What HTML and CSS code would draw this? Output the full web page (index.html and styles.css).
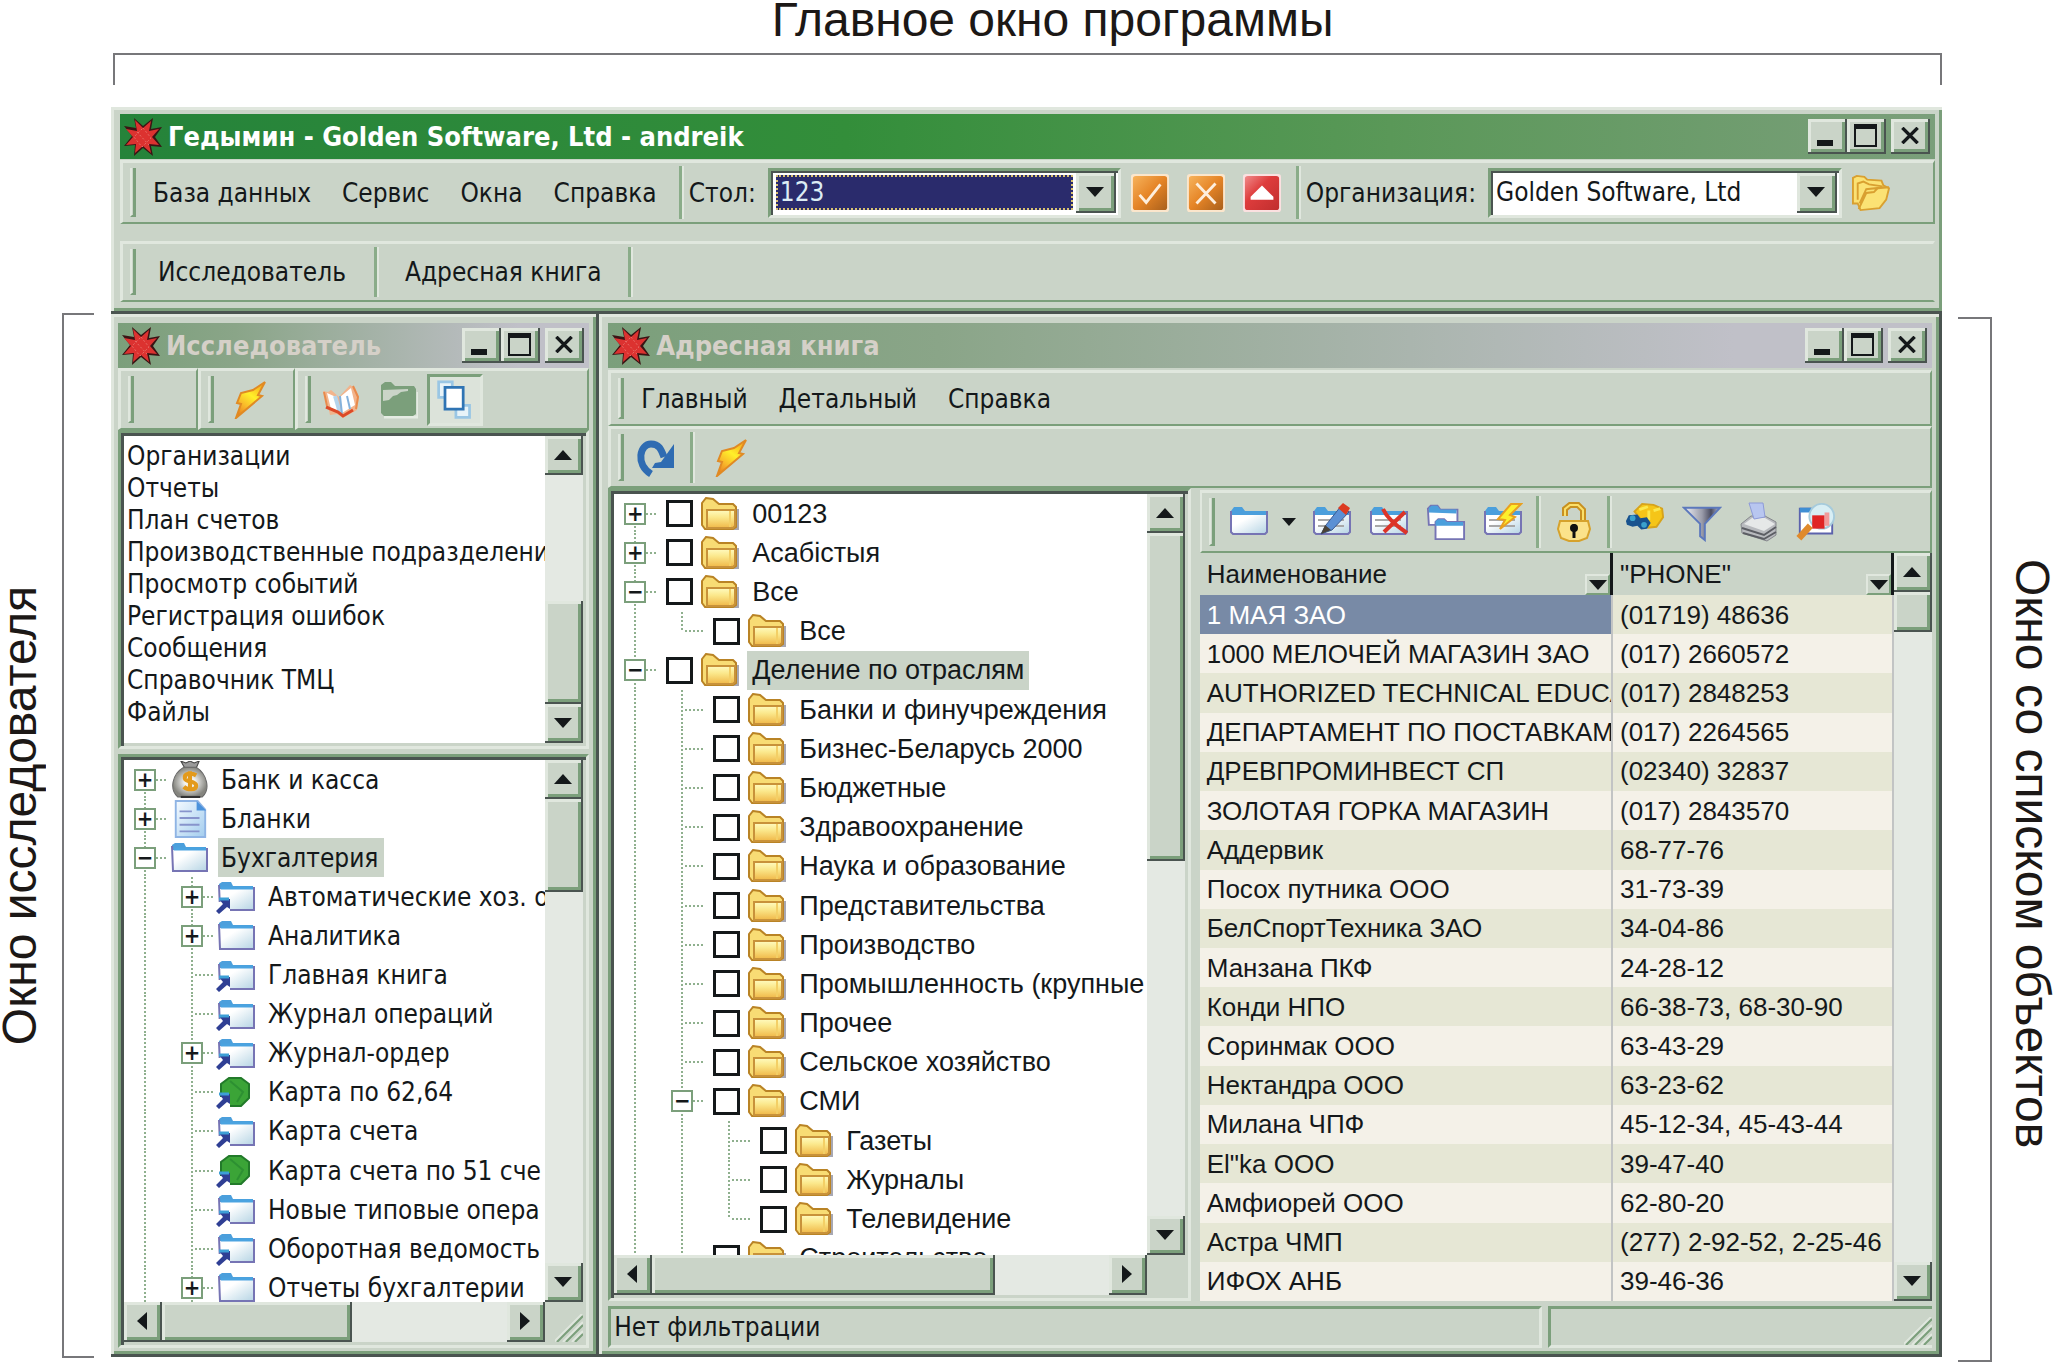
FILE: index.html
```html
<!DOCTYPE html>
<html lang="ru">
<head>
<meta charset="utf-8">
<title>Гедымин - Golden Software, Ltd - andreik</title>
<link rel="stylesheet" href="styles.css">
</head>
<body>
<svg class="sprite" aria-hidden="true">
  <defs>
    <linearGradient id="g-blue" x1="0" y1="0" x2="1" y2="1"><stop offset="0.3" stop-color="#fff"/><stop offset="1" stop-color="#b5d4e4"/></linearGradient>
    <linearGradient id="g-yellow" x1="0" y1="0" x2="0" y2="1"><stop offset="0" stop-color="#fffbc0"/><stop offset="0.4" stop-color="#fbe88c"/><stop offset="1" stop-color="#f0b848"/></linearGradient>
    <linearGradient id="g-orange" x1="0" y1="0" x2="1" y2="1"><stop offset="0" stop-color="#f7b35c"/><stop offset="0.5" stop-color="#e58426"/><stop offset="1" stop-color="#a9601c"/></linearGradient>
    <linearGradient id="g-red" x1="0" y1="0" x2="1" y2="1"><stop offset="0" stop-color="#f08a8a"/><stop offset="0.4" stop-color="#de3c3c"/><stop offset="1" stop-color="#c02e2e"/></linearGradient>
    <linearGradient id="g-bolt" x1="0.8" y1="0" x2="0.2" y2="1"><stop offset="0" stop-color="#f7a81c"/><stop offset="0.4" stop-color="#fff02a"/><stop offset="0.7" stop-color="#f9b92a"/><stop offset="1" stop-color="#e87d1c"/></linearGradient>
    <linearGradient id="g-steel" x1="0" y1="0" x2="1" y2="0"><stop offset="0" stop-color="#f2f2f6"/><stop offset="0.5" stop-color="#9a9caa"/><stop offset="0.75" stop-color="#4a4c60"/><stop offset="1" stop-color="#b8c0dc"/></linearGradient>
    <linearGradient id="g-doc" x1="0" y1="0" x2="1" y2="1"><stop offset="0" stop-color="#f4faff"/><stop offset="1" stop-color="#a3cdee"/></linearGradient>
    <radialGradient id="g-bag"><stop offset="0.3" stop-color="#f4f4f2"/><stop offset="1" stop-color="#85857f"/></radialGradient>
  </defs>
  <symbol id="star" viewBox="0 0 38 38"><path d="M10 0l9 8 10-8-2 11 11-2-7 10 7 10-11-1 2 10-10-8-9 8 1-11-11 1 8-10-8-10 12 2z" fill="#3a1414"/><path d="M11 2l8 8 8-7-2 10 10-2-7 8 7 8-10-1 2 9-8-7-8 7 1-9-10 1 7-8-7-8 11 2z" fill="#dc3230"/><path d="M19 10l8 10-9 9-8-10zM13 14l12 13" fill="none" stroke="#e66c66" stroke-dasharray="2 2"/></symbol>
  <symbol id="bolt" viewBox="0 0 38 38"><path d="M34 1l-7 13 4 1L5 37l5-14-4-1 4-10 12-3z" fill="url(#g-bolt)" stroke="#e08a24" stroke-width="2"/></symbol>
  <symbol id="book" viewBox="0 0 38 38"><path d="M1 10l5 1 3-2 8 7L28 4l5 3 4 9-2 13-9 5-5 3-6-4-7 1-2-9z" fill="#f2b48c"/><path d="M5 12l9 4 5 17-10-5zM29 7l4 17-13 8-2-16z" fill="#fff"/><path d="M13 15l5 17" stroke="#b4d4ec" stroke-width="4"/><path d="M18 15l2 18M25 15l3 13" stroke="#84b2dc" stroke-width="2" fill="none"/><path d="M4 26l12 5 5 4 10-6" fill="none" stroke="#dc4a28" stroke-width="3"/><path d="M2 11l3 14M31 5l5 11-2 12" fill="none" stroke="#e88a4c" stroke-width="2"/></symbol>
  <symbol id="folder-off" viewBox="0 0 38 38"><path d="M4 36h34V11" fill="none" stroke="#e4ebe2" stroke-width="3"/><path d="M1 4l4-3h6l4 4h19l2 3v25l-3 2H4l-3-3z" fill="#7b9f7b"/><path d="M3 9v11l6-1 4-4 4-1 4-3 7-1V8z" fill="#cad4c8"/></symbol>
  <symbol id="layers" viewBox="0 0 40 44"><path d="M2 2h15v17H2zM21 28h15v13H21z" fill="#e8f3f8" stroke="#9ac6e4" stroke-width="3"/><path d="M9 8h20v24H9z" fill="#fff" stroke="#2f74b4" stroke-width="3"/></symbol>
  <symbol id="refresh" viewBox="0 0 38 38"><path d="M15 35C-1 25 4 5 15 5c8 0 10 5 13 13" fill="none" stroke="#2f6cb2" stroke-width="7"/><path d="M38 5v24H16l3-5 6-1z" fill="#2f6cb2"/></symbol>
  <symbol id="fold-y" viewBox="0 0 40 34"><path d="M6 12h33v21H7z" fill="#a8a8b2"/><path d="M2 6l4-5 7 1 6 5h14l3 3v20l-3 2H5l-3-4z" fill="#f8dc74" stroke="#b98325" stroke-width="2"/><path d="M7 13h28v16l-2 2H7z" fill="url(#g-yellow)" stroke="#c8923a" stroke-width="2"/><path d="M30 14v16" stroke="#f3cf66" stroke-width="2"/></symbol>
  <symbol id="fold-b" viewBox="0 0 38 31"><path d="M1 3l3-2h9l2 4h20v4H1z" fill="#4b9fdc"/><path d="M2 8h34v21H3z" fill="url(#g-blue)"/><path d="M1 4l1 25h34V6" fill="none" stroke="#7674b4" stroke-width="2"/><path d="M3 7h32" stroke="#4aa3e0" stroke-width="3"/></symbol>
  <symbol id="cut" viewBox="0 0 14 18"><path d="M0 6h14v12H4z" fill="#fff"/><path d="M3 3h11v10l-3-2-8 7-3-3 7-7z" fill="#2f3f94"/><path d="M3 3h10" stroke="#3d9fd6" stroke-width="3"/></symbol>
  <symbol id="octagon" viewBox="0 0 38 31"><path d="M11 1h12l8 6v14l-8 8H11l-8-8V7z" fill="#3ba437" stroke="#227a2a" stroke-width="2"/><path d="M12 4l13 11-6 10" fill="none" stroke="#2d9032" stroke-width="2"/></symbol>
  <symbol id="bag" viewBox="0 0 36 37"><path d="M9 0l4 7h11l3-7-5 2-4-2-4 2z" fill="#9a9a9a" stroke="#444"/><path d="M12 6C0 13-2 28 6 35h24c8-7 5-22-6-29z" fill="url(#g-bag)" stroke="#666"/><path d="M9 35h19" stroke="#333" stroke-width="2"/><path d="M24 14c-5-3-12-2-11 3 1 4 11 2 11 7s-9 4-12 1M18 10v19" stroke="#e39a1c" stroke-width="4" fill="none"/></symbol>
  <symbol id="doc" viewBox="0 0 36 40"><path d="M3 1h23l8 9v29H3z" fill="url(#g-doc)" stroke="#8fb4e4" stroke-width="2"/><path d="M25 1v10h10z" fill="#4a92dc"/><path d="M7 12h13M7 19h21M7 26h21M7 33h21" stroke="#8794cc" stroke-width="2"/></symbol>
  <symbol id="check" viewBox="0 0 40 40"><rect width="40" height="40" rx="3" fill="#fbe6cc"/><rect x="2" y="2" width="36" height="36" rx="3" fill="url(#g-orange)"/><path d="M9 22l7 8 15-19" fill="none" stroke="#fdeedd" stroke-width="3"/></symbol>
  <symbol id="cancel" viewBox="0 0 40 40"><rect width="40" height="40" rx="3" fill="#fbe6cc"/><rect x="2" y="2" width="36" height="36" rx="3" fill="url(#g-orange)"/><path d="M10 10l20 21M30 10L10 31" fill="none" stroke="#fdeedd" stroke-width="3"/></symbol>
  <symbol id="up" viewBox="0 0 40 40"><rect width="40" height="40" rx="3" fill="#fbe0e0"/><rect x="2" y="2" width="36" height="36" rx="3" fill="url(#g-red)"/><path d="M20 12l12 12v3H8v-3z" fill="#fff"/></symbol>
  <symbol id="open" viewBox="0 0 40 38"><path d="M1 30V3l4-2 8 1 3 3 15 1 2 5 6 3-3 12-7 9-20 2-3-7z" fill="#fbe274" stroke="#d9a030" stroke-width="2"/><path d="M6 26V9l6-2 6 3 14 2M8 30l7-15 19-2M7 36l8-17 8-1 4-4 12-1" fill="none" stroke="#d9a030" stroke-width="2"/></symbol>
  <symbol id="t-folder" viewBox="0 0 38 40"><path d="M1 9l3-4h8l3 4h21v5H1z" fill="#4b9fdc"/><path d="M2 13h34v19H2z" fill="url(#g-blue)"/><path d="M1 9v21l2 2h32l2-2V9" fill="none" stroke="#7674b4" stroke-width="2"/></symbol>
  <symbol id="t-edit" viewBox="0 0 38 40"><use href="#t-folder"/><path d="M5 18h26M5 24h26" stroke="#a8a8a8" stroke-width="2"/><path d="M8 32l5-9L28 4l8 6-17 18z" fill="#5b90d4" stroke="#3c5a90"/><path d="M8 32l4-9 6 5z" fill="#494238"/><path d="M25 6l5-5 7 5-4 7z" fill="#dc3a20"/></symbol>
  <symbol id="t-del" viewBox="0 0 38 40"><use href="#t-folder"/><path d="M5 18h26M5 24h26" stroke="#a8a8a8" stroke-width="2"/><path d="M13 7c4 9 12 16 24 24M35 10L14 30" fill="none" stroke="#dc3428" stroke-width="4"/></symbol>
  <symbol id="t-copy" viewBox="0 0 40 42"><path d="M1 7l3-3h7l3 4h18v16H2z" fill="#fff" stroke="#7674b4" stroke-width="2"/><path d="M2 11V6l3-2h6l3 4h17v4z" fill="#4b9fdc"/><path d="M9 21l3-3h6l3 3h18v18H9z" fill="#fff" stroke="#7674b4" stroke-width="2"/><path d="M9 25v-5l3-2h6l3 3h17v4z" fill="#4b9fdc"/></symbol>
  <symbol id="t-bolt" viewBox="0 0 38 40"><use href="#t-folder"/><path d="M5 18h26M5 24h26" stroke="#a8a8a8" stroke-width="2"/><path d="M37 2h-10L14 17l7 1-5 9 15-12-5-2z" fill="#fdf02c" stroke="#e8a020" stroke-width="2"/></symbol>
  <symbol id="t-lock" viewBox="0 0 34 40"><path d="M8 14V7l5-4h8l5 5v12" fill="none" stroke="#c89020" stroke-width="6"/><path d="M8 14V7l5-4h8l5 5v12" fill="none" stroke="#fbe06a" stroke-width="2"/><path d="M3 19h28l2 8-3 9-8 3H12l-8-3-3-9z" fill="#fbe28a" stroke="#d6a22c" stroke-width="2"/><path d="M17 22v14" stroke="#111" stroke-width="3"/><circle cx="17" cy="26" r="4" fill="#111"/></symbol>
  <symbol id="t-find" viewBox="0 0 42 40"><path d="M10 9l8-8 12 1 9 4 1 9-7 10-9 1z" fill="#f5c518" stroke="#d6a31c" stroke-width="2"/><path d="M15 7l9-3M30 8l7-2M25 8v10" stroke="#fbe84e" stroke-width="3"/><path d="M1 19l3-6 9-1 3 4 7-1 4 6-4 6-6 1-4-4-5 1-6-2z" fill="#18528e"/><circle cx="8" cy="16" r="3" fill="#3ba1cc"/><circle cx="20" cy="23" r="3" fill="#3ba1cc"/></symbol>
  <symbol id="t-filter" viewBox="0 0 42 40"><path d="M2 5h38L24 22v17l-5-4V22z" fill="url(#g-steel)" stroke="#5c78bc" stroke-width="2"/></symbol>
  <symbol id="t-print" viewBox="0 0 40 40"><path d="M2 22l10-8h14l11 6v13l-9 6-25-8z" fill="#b8babe" stroke="#85878c"/><path d="M3 26l22 7 12-8M4 31l21 6 12-7" fill="none" stroke="#5c5e64" stroke-width="2"/><path d="M5 22l20 7 11-7-10-6H13z" fill="#e6e8e8"/><path d="M10 1h14l2 14-11 2z" fill="#b8c6f0" stroke="#8d9ad8"/></symbol>
  <symbol id="t-look" viewBox="0 0 42 40"><path d="M4 6h14v4h20v22H4z" fill="#fff" stroke="#5c62ac" stroke-width="2"/><path d="M4 5h12v5H4z" fill="#3f8ed4"/><circle cx="27" cy="14" r="13" fill="#d8eef4" stroke="#a6cbdc" stroke-width="2"/><path d="M17 13h13v14H17z" fill="#e02424"/><path d="M30 10h5v14h-5z" fill="#f29a9a"/><path d="M3 37l12-13" stroke="#e08a2c" stroke-width="7"/></symbol>
</svg>

<div class="figure">
  <header class="note-top">
    <h1 class="note-text">Главное окно программы</h1>
    <div class="bracket bracket-top"></div>
  </header>
  <aside class="note-side note-left"><p class="note-text note-up">Окно исследователя</p><div class="bracket bracket-left"></div></aside>

  <main class="app">
    <section class="frame frame-main">
      <div class="title title-active">
        <svg class="logo"><use href="#star"/></svg><h2 class="title-text">Гедымин - Golden Software, Ltd - andreik</h2>
        <button class="wbtn" aria-label="Свернуть"><span class="w-min"></span></button><button class="wbtn" aria-label="Развернуть"><span class="w-max"></span></button><button class="wbtn wbtn-close" aria-label="Закрыть"><svg class="w-x" viewBox="0 0 20 20"><path d="M1 1l18 18M19 1L1 19"/></svg></button>
      </div>
      <div class="bar bar-menu">
        <span class="grip"></span>
        <nav class="menu"><a href="#">База данных</a><a href="#">Сервис</a><a href="#">Окна</a><a href="#">Справка</a></nav>
        <span class="sep"></span>
        <label class="bar-label" for="desk">Стол:</label>
        <div class="combo combo-desk"><select id="desk" class="combo-select combo-on"><option>123</option></select><span class="combo-arrow"><i class="tri tri-down"></i></span></div>
        <div class="square-tools"><button class="tool" aria-label="Сохранить"><svg class="ic38"><use href="#check"/></svg></button><button class="tool" aria-label="Удалить"><svg class="ic38"><use href="#cancel"/></svg></button><button class="tool" aria-label="Вверх"><svg class="ic38"><use href="#up"/></svg></button></div>
        <span class="sep"></span>
        <label class="bar-label" for="org">Организация:</label>
        <div class="combo combo-org"><select id="org" class="combo-select"><option>Golden Software, Ltd</option></select><span class="combo-arrow"><i class="tri tri-down"></i></span></div>
        <button class="tool tool-open" aria-label="Открыть"><svg class="ic38"><use href="#open"/></svg></button>
      </div>
      <div class="bar bar-tabs">
        <span class="grip"></span><button class="tab">Исследователь</button><span class="sep"></span><button class="tab">Адресная книга</button><span class="sep"></span>
      </div>
    </section>

    <div class="mdi">
      <section class="frame frame-explorer">
        <div class="title">
          <svg class="logo"><use href="#star"/></svg><h2 class="title-text">Исследователь</h2>
          <button class="wbtn" aria-label="Свернуть"><span class="w-min"></span></button><button class="wbtn" aria-label="Развернуть"><span class="w-max"></span></button><button class="wbtn wbtn-close" aria-label="Закрыть"><svg class="w-x" viewBox="0 0 20 20"><path d="M1 1l18 18M19 1L1 19"/></svg></button>
        </div>
        <div class="bands">
          <div class="bar band-a"><span class="grip"></span></div>
          <div class="bar band-b"><span class="grip"></span><button class="tool" aria-label="Выполнить"><svg class="ic38"><use href="#bolt"/></svg></button></div>
          <div class="bar band-c"><span class="grip"></span><button class="tool" aria-label="Справочник"><svg class="ic38"><use href="#book"/></svg></button><button class="tool" aria-label="Папка"><svg class="ic38"><use href="#folder-off"/></svg></button><button class="tool tool-down" aria-label="Окна"><svg class="ic40"><use href="#layers"/></svg></button></div>
        </div>
        <div class="sunken recent">
          <ul class="recent-list"><li>Организации</li><li>Отчеты</li><li>План счетов</li><li>Производственные подразделения</li><li>Просмотр событий</li><li>Регистрация ошибок</li><li>Сообщения</li><li>Справочник ТМЦ</li><li>Файлы</li></ul>
          <div class="vscroll"><button class="sbtn" aria-label="Вверх"><i class="tri tri-up"></i></button><div class="track track-end"><div class="thumb" style="height:45%"></div></div><button class="sbtn" aria-label="Вниз"><i class="tri tri-down"></i></button></div>
        </div>
        <div class="sunken nav-tree">
          <div class="pane-row">
            <ul class="tree tree-nav">
              <li><span class="g gf"><button class="ex">+</button></span><svg class="ni ni-tall"><use href="#bag"/></svg><span class="lb">Банк и касса</span></li>
              <li><span class="g gt"><button class="ex">+</button></span><svg class="ni ni-tall"><use href="#doc"/></svg><span class="lb">Бланки</span></li>
              <li><span class="g gt"><button class="ex">−</button></span><svg class="ni"><use href="#fold-b"/></svg><span class="lb lb-on">Бухгалтерия</span></li>
              <li><span class="g gv"></span><span class="g gt"><button class="ex">+</button></span><svg class="ni"><use href="#fold-b"/></svg><svg class="cut"><use href="#cut"/></svg><span class="lb">Автоматические хоз. операции</span></li>
              <li><span class="g gv"></span><span class="g gt"><button class="ex">+</button></span><svg class="ni"><use href="#fold-b"/></svg><span class="lb">Аналитика</span></li>
              <li><span class="g gv"></span><span class="g gt"></span><svg class="ni"><use href="#fold-b"/></svg><svg class="cut"><use href="#cut"/></svg><span class="lb">Главная книга</span></li>
              <li><span class="g gv"></span><span class="g gt"></span><svg class="ni"><use href="#fold-b"/></svg><svg class="cut"><use href="#cut"/></svg><span class="lb">Журнал операций</span></li>
              <li><span class="g gv"></span><span class="g gt"><button class="ex">+</button></span><svg class="ni"><use href="#fold-b"/></svg><svg class="cut"><use href="#cut"/></svg><span class="lb">Журнал-ордер</span></li>
              <li><span class="g gv"></span><span class="g gt"></span><svg class="ni"><use href="#octagon"/></svg><svg class="cut"><use href="#cut"/></svg><span class="lb">Карта по 62,64</span></li>
              <li><span class="g gv"></span><span class="g gt"></span><svg class="ni"><use href="#fold-b"/></svg><svg class="cut"><use href="#cut"/></svg><span class="lb">Карта счета</span></li>
              <li><span class="g gv"></span><span class="g gt"></span><svg class="ni"><use href="#octagon"/></svg><svg class="cut"><use href="#cut"/></svg><span class="lb">Карта счета по 51 сче</span></li>
              <li><span class="g gv"></span><span class="g gt"></span><svg class="ni"><use href="#fold-b"/></svg><svg class="cut"><use href="#cut"/></svg><span class="lb">Новые типовые опера</span></li>
              <li><span class="g gv"></span><span class="g gt"></span><svg class="ni"><use href="#fold-b"/></svg><svg class="cut"><use href="#cut"/></svg><span class="lb">Оборотная ведомость</span></li>
              <li><span class="g gv"></span><span class="g gt"><button class="ex">+</button></span><svg class="ni"><use href="#fold-b"/></svg><span class="lb">Отчеты бухгалтерии</span></li>
            </ul>
            <div class="vscroll"><button class="sbtn" aria-label="Вверх"><i class="tri tri-up"></i></button><div class="track"><div class="thumb" style="height:20%"></div></div><button class="sbtn" aria-label="Вниз"><i class="tri tri-down"></i></button></div>
          </div>
          <div class="hscroll"><button class="sbtn" aria-label="Влево"><i class="tri tri-left"></i></button><div class="track"><div class="thumb" style="width:55%"></div></div><button class="sbtn" aria-label="Вправо"><i class="tri tri-right"></i></button><span class="corner"><svg class="size-grip" viewBox="0 0 28 28"><path class="sg-l" d="M-1 28L27 0M8 28L28 8M17 28L28 17"/><path d="M2 28L28 2M11 28L28 11M20 28L28 20"/></svg></span></div>
        </div>
      </section>

      <section class="frame">
        <div class="title">
          <svg class="logo"><use href="#star"/></svg><h2 class="title-text">Адресная книга</h2>
          <button class="wbtn" aria-label="Свернуть"><span class="w-min"></span></button><button class="wbtn" aria-label="Развернуть"><span class="w-max"></span></button><button class="wbtn wbtn-close" aria-label="Закрыть"><svg class="w-x" viewBox="0 0 20 20"><path d="M1 1l18 18M19 1L1 19"/></svg></button>
        </div>
        <div class="bar bar-sub"><span class="grip"></span><nav class="menu"><a href="#">Главный</a><a href="#">Детальный</a><a href="#">Справка</a></nav></div>
        <div class="bar bar-quick"><span class="grip"></span><button class="tool" aria-label="Обновить"><svg class="ic38"><use href="#refresh"/></svg></button><span class="sep"></span><button class="tool" aria-label="Выполнить"><svg class="ic38"><use href="#bolt"/></svg></button></div>
        <div class="split">
          <div class="sunken groups">
            <div class="pane-row">
              <ul class="tree tree-groups">
                <li><span class="g gf"><button class="ex">+</button></span><input type="checkbox" id="c1"><svg class="fi"><use href="#fold-y"/></svg><label class="lb" for="c1">00123</label></li>
                <li><span class="g gt"><button class="ex">+</button></span><input type="checkbox" id="c2"><svg class="fi"><use href="#fold-y"/></svg><label class="lb" for="c2">Асабістыя</label></li>
                <li><span class="g gt"><button class="ex">−</button></span><input type="checkbox" id="c3"><svg class="fi"><use href="#fold-y"/></svg><label class="lb" for="c3">Все</label></li>
                <li><span class="g gv"></span><span class="g gl"></span><input type="checkbox" id="c4"><svg class="fi"><use href="#fold-y"/></svg><label class="lb" for="c4">Все</label></li>
                <li><span class="g gt"><button class="ex">−</button></span><input type="checkbox" id="c5"><svg class="fi"><use href="#fold-y"/></svg><label class="lb lb-on" for="c5">Деление по отраслям</label></li>
                <li><span class="g gv"></span><span class="g gt"></span><input type="checkbox" id="c6"><svg class="fi"><use href="#fold-y"/></svg><label class="lb" for="c6">Банки и финучреждения</label></li>
                <li><span class="g gv"></span><span class="g gt"></span><input type="checkbox" id="c7"><svg class="fi"><use href="#fold-y"/></svg><label class="lb" for="c7">Бизнес-Беларусь 2000</label></li>
                <li><span class="g gv"></span><span class="g gt"></span><input type="checkbox" id="c8"><svg class="fi"><use href="#fold-y"/></svg><label class="lb" for="c8">Бюджетные</label></li>
                <li><span class="g gv"></span><span class="g gt"></span><input type="checkbox" id="c9"><svg class="fi"><use href="#fold-y"/></svg><label class="lb" for="c9">Здравоохранение</label></li>
                <li><span class="g gv"></span><span class="g gt"></span><input type="checkbox" id="c10"><svg class="fi"><use href="#fold-y"/></svg><label class="lb" for="c10">Наука и образование</label></li>
                <li><span class="g gv"></span><span class="g gt"></span><input type="checkbox" id="c11"><svg class="fi"><use href="#fold-y"/></svg><label class="lb" for="c11">Представительства</label></li>
                <li><span class="g gv"></span><span class="g gt"></span><input type="checkbox" id="c12"><svg class="fi"><use href="#fold-y"/></svg><label class="lb" for="c12">Производство</label></li>
                <li><span class="g gv"></span><span class="g gt"></span><input type="checkbox" id="c13"><svg class="fi"><use href="#fold-y"/></svg><label class="lb" for="c13">Промышленность (крупные</label></li>
                <li><span class="g gv"></span><span class="g gt"></span><input type="checkbox" id="c14"><svg class="fi"><use href="#fold-y"/></svg><label class="lb" for="c14">Прочее</label></li>
                <li><span class="g gv"></span><span class="g gt"></span><input type="checkbox" id="c15"><svg class="fi"><use href="#fold-y"/></svg><label class="lb" for="c15">Сельское хозяйство</label></li>
                <li><span class="g gv"></span><span class="g gt"><button class="ex">−</button></span><input type="checkbox" id="c16"><svg class="fi"><use href="#fold-y"/></svg><label class="lb" for="c16">СМИ</label></li>
                <li><span class="g gv"></span><span class="g gv"></span><span class="g gt"></span><input type="checkbox" id="c17"><svg class="fi"><use href="#fold-y"/></svg><label class="lb" for="c17">Газеты</label></li>
                <li><span class="g gv"></span><span class="g gv"></span><span class="g gt"></span><input type="checkbox" id="c18"><svg class="fi"><use href="#fold-y"/></svg><label class="lb" for="c18">Журналы</label></li>
                <li><span class="g gv"></span><span class="g gv"></span><span class="g gl"></span><input type="checkbox" id="c19"><svg class="fi"><use href="#fold-y"/></svg><label class="lb" for="c19">Телевидение</label></li>
                <li><span class="g gv"></span><span class="g gt"></span><input type="checkbox" id="c20"><svg class="fi"><use href="#fold-y"/></svg><label class="lb" for="c20">Строительство</label></li>
              </ul>
              <div class="vscroll"><button class="sbtn" aria-label="Вверх"><i class="tri tri-up"></i></button><div class="track"><div class="thumb" style="height:48%"></div></div><button class="sbtn" aria-label="Вниз"><i class="tri tri-down"></i></button></div>
            </div>
            <div class="hscroll"><button class="sbtn" aria-label="Влево"><i class="tri tri-left"></i></button><div class="track"><div class="thumb" style="width:75%"></div></div><button class="sbtn" aria-label="Вправо"><i class="tri tri-right"></i></button><span class="corner"></span></div>
          </div>
          <div class="objects">
            <div class="bar bar-objects">
              <span class="grip"></span>
              <button class="tool" aria-label="Создать"><svg class="ic40"><use href="#t-folder"/></svg></button><i class="tri tri-down tri-small"></i><button class="tool" aria-label="Изменить"><svg class="ic40"><use href="#t-edit"/></svg></button><button class="tool" aria-label="Удалить"><svg class="ic40"><use href="#t-del"/></svg></button><button class="tool" aria-label="Копировать"><svg class="ic40"><use href="#t-copy"/></svg></button><button class="tool" aria-label="Выполнить"><svg class="ic40"><use href="#t-bolt"/></svg></button>
              <span class="sep"></span><button class="tool" aria-label="Доступ"><svg class="ic40"><use href="#t-lock"/></svg></button><span class="sep"></span>
              <button class="tool" aria-label="Найти"><svg class="ic40"><use href="#t-find"/></svg></button><button class="tool" aria-label="Фильтр"><svg class="ic40"><use href="#t-filter"/></svg></button><button class="tool" aria-label="Печать"><svg class="ic40"><use href="#t-print"/></svg></button><button class="tool" aria-label="Просмотр"><svg class="ic40"><use href="#t-look"/></svg></button>
            </div>
            <div class="grid-row">
              <div class="grid-view">
              <table class="grid">
                <colgroup><col><col class="col-phone"></colgroup>
                <thead><tr><th scope="col"><div class="th"><span>Наименование</span><button class="fbtn" aria-label="Фильтр"><i class="tri tri-down"></i></button></div></th><th scope="col"><div class="th"><span>"PHONE"</span><button class="fbtn" aria-label="Фильтр"><i class="tri tri-down"></i></button></div></th></tr></thead>
                <tbody>
                  <tr><td class="cell-on">1 МАЯ ЗАО</td><td>(01719) 48636</td></tr>
                  <tr><td>1000 МЕЛОЧЕЙ МАГАЗИН ЗАО</td><td>(017) 2660572</td></tr>
                  <tr><td>AUTHORIZED TECHNICAL EDUCATION</td><td>(017) 2848253</td></tr>
                  <tr><td>ДЕПАРТАМЕНТ ПО ПОСТАВКАМ</td><td>(017) 2264565</td></tr>
                  <tr><td>ДРЕВПРОМИНВЕСТ СП</td><td>(02340) 32837</td></tr>
                  <tr><td>ЗОЛОТАЯ ГОРКА МАГАЗИН</td><td>(017) 2843570</td></tr>
                  <tr><td>Аддервик</td><td>68-77-76</td></tr>
                  <tr><td>Посох путника ООО</td><td>31-73-39</td></tr>
                  <tr><td>БелСпортТехника ЗАО</td><td>34-04-86</td></tr>
                  <tr><td>Манзана ПКФ</td><td>24-28-12</td></tr>
                  <tr><td>Конди НПО</td><td>66-38-73, 68-30-90</td></tr>
                  <tr><td>Соринмак ООО</td><td>63-43-29</td></tr>
                  <tr><td>Нектандра ООО</td><td>63-23-62</td></tr>
                  <tr><td>Милана ЧПФ</td><td>45-12-34, 45-43-44</td></tr>
                  <tr><td>El"ka ООО</td><td>39-47-40</td></tr>
                  <tr><td>Амфиорей ООО</td><td>62-80-20</td></tr>
                  <tr><td>Астра ЧМП</td><td>(277) 2-92-52, 2-25-46</td></tr>
                  <tr><td>ИФОХ АНБ</td><td>39-46-36</td></tr>
                </tbody>
              </table>
              </div>
              <div class="vscroll"><button class="sbtn" aria-label="Вверх"><i class="tri tri-up"></i></button><div class="track"><div class="thumb" style="height:6%"></div></div><button class="sbtn" aria-label="Вниз"><i class="tri tri-down"></i></button></div>
            </div>
          </div>
        </div>
        <footer class="status"><div class="cellbox">Нет фильтрации</div><div class="cellbox cellbox-end"><svg class="size-grip" viewBox="0 0 28 28"><path class="sg-l" d="M-1 28L27 0M8 28L28 8M17 28L28 17"/><path d="M2 28L28 2M11 28L28 11M20 28L28 20"/></svg></div></footer>
      </section>
    </div>
  </main>

  <aside class="note-side note-right"><div class="bracket bracket-right"></div><p class="note-text note-down">Окно со списком объектов</p></aside>
</div>
</body>
</html>
```
FILE: styles.css
```css
:root {
  --face: #cad4c8;
  --light: #e0e7de;
  --shadow: #7b9f7b;
  --dark: #4a5450;
  --track: #e4e9e3;
  --ink: #14181a;
  --ui: "DejaVu Sans Condensed", "DejaVu Sans", sans-serif;
  --list: "Liberation Sans", Arial, sans-serif;
}
* { box-sizing: border-box; }
body { margin: 0; background: #fff; color: var(--ink); font: 26px/32px var(--ui); }
h1, h2, p, ul { margin: 0; padding: 0; font-weight: normal; }
ul { list-style: none; }
a { color: inherit; text-decoration: none; }
button { font: inherit; color: inherit; background: none; border: 0; padding: 0; margin: 0; }
svg { display: block; }
.sprite { position: absolute; width: 0; height: 0; }

/* annotations around the window */
.figure { display: grid; grid-template-columns: 111px minmax(0, 1fr) 112px; grid-template-rows: 107px minmax(0, 1fr); height: 100vh; }
.note-text { font: 48px/40px var(--list); white-space: nowrap; color: #1c1816; }
.note-top { grid-column: 2; display: flex; flex-direction: column; align-items: center; }
.note-top .note-text { padding: 0 0 13px 52px; }
.note-side { grid-row: 2; display: flex; align-items: center; justify-content: space-between; }
.note-left { grid-column: 1; padding: 206px 17px 5px 0; }
.note-right { grid-column: 3; padding: 210px 2px 1px 16px; }
.note-up { writing-mode: vertical-rl; transform: rotate(180deg); margin-bottom: 40px; }
.note-down { writing-mode: vertical-rl; margin-top: 28px; }
.bracket { border: 2px solid #77777a; }
.bracket-top { align-self: stretch; height: 32px; border-bottom: 0; margin: 0 0 0 2px; }
.bracket-left { width: 32px; height: 100%; border-right: 0; }
.bracket-right { width: 34px; height: 100%; border-left: 0; }

/* window frames */
.app { grid-column: 2; grid-row: 2; display: flex; flex-direction: column; min-height: 0; padding-bottom: 6px; }
.frame { display: flex; flex-direction: column; min-width: 0; min-height: 0; background: var(--face); padding: 9px 7px 6px 9px; border: solid var(--dark); border-width: 0 3px 3px 0; box-shadow: inset 3px 3px var(--light), inset -3px -3px var(--shadow); }
.frame-main { flex: none; padding: 7px 7px 9px 9px; border-right-width: 0; }
.frame-explorer { padding-left: 7px; }
.mdi { flex: 1; min-height: 0; display: grid; grid-template-columns: 4fr 11fr; grid-template-rows: minmax(0, 1fr); }
.title { flex: none; height: 45px; display: flex; align-items: center; padding: 0 5px 0 4px; background: linear-gradient(90deg, #7b9f7b, #8aa588 25%, #c0c0c8 85%); color: #d5d0c8; }
.title-active { background: linear-gradient(90deg, #25833a, #338e3a 40%, #5a9858 70%, #7b9f7b); color: #fff; }
.title-text { flex: 1; min-width: 0; font: bold 27px/32px var(--ui); white-space: nowrap; overflow: hidden; padding-left: 6px; }
.logo { width: 38px; height: 40px; flex: none; }
.wbtn, .sbtn, .thumb, .combo-arrow { background: var(--face); border: solid; border-width: 0 2px 2px 0; border-color: var(--dark); box-shadow: inset 3px 3px var(--light), inset -3px -3px var(--shadow); }
.wbtn { width: 39px; height: 35px; flex: none; display: flex; align-items: center; justify-content: center; }
.wbtn-close { margin-left: 5px; }
.w-min { width: 16px; height: 6px; background: var(--ink); margin: 14px 4px 0 0; }
.w-max { width: 23px; height: 23px; border: 2px solid var(--ink); border-top-width: 5px; }
.w-x { width: 18px; height: 17px; fill: none; stroke: var(--ink); stroke-width: 4; }

/* toolbars */
.bar { flex: none; display: flex; align-items: center; border: solid; border-width: 3px 2px 2px 3px; border-color: var(--light) var(--shadow) var(--shadow) var(--light); }
.grip { flex: none; align-self: stretch; width: 6px; margin: 5px 0 5px 7px; border: solid; border-width: 0 3px 2px 2px; border-color: var(--light) var(--shadow) var(--shadow) var(--light); }
.sep { flex: none; align-self: stretch; width: 5px; margin: 3px 0; border-left: 3px solid #8aac89; border-right: 2px solid var(--light); }
.bar-menu { height: 64px; margin-top: 1px; }
.bar-menu .sep { margin: 3px 5px 3px 22px; }
.menu { display: flex; gap: 31px; padding-left: 17px; white-space: nowrap; }
.bar-label { white-space: nowrap; padding-right: 12px; }
.combo { display: flex; height: 50px; padding: 2px; border: 3px solid; border-color: var(--shadow) var(--light) var(--light) var(--shadow); background: #fff; box-shadow: inset 2px 2px var(--dark); }
.combo-desk { flex: 354 1 0; }
.combo-org { flex: 355 1 0; }
.combo-select { flex: 1; min-width: 0; appearance: none; border: 0; border-radius: 0; background: #fff; color: var(--ink); font: inherit; padding: 0 2px; margin: 1px 1px 3px; outline: 0; }
.combo-on { background: #2a2b6c; color: #dcecf4; outline: 2px dotted #d8c070; outline-offset: -2px; padding-left: 4px; margin: 2px 3px 3px; }
.combo-arrow { width: 40px; display: flex; align-items: center; justify-content: center; }
.square-tools { display: flex; gap: 18px; padding-left: 10px; }
.square-tools + .sep { margin-left: 15px; }
.tool { flex: none; display: flex; align-items: center; justify-content: center; }
.tool-open { margin: 0 43px 0 10px; }
.ic38 { width: 38px; height: 38px; }
.ic40 { width: 40px; height: 40px; }
.bar-tabs { height: 61px; margin-top: 17px; border-right-color: var(--face); }
.tab { padding: 0 26px; white-space: nowrap; }
.tab:first-of-type { padding: 0 28px 0 22px; }
.bands { display: flex; }
.bands .bar { height: 62px; }
.band-a { width: 80px; }
.band-b { width: 97px; gap: 17px; }
.band-c { flex: 1; gap: 20px; }
.band-c .tool:first-of-type { margin-left: -9px; }
.tool-down { width: 56px; height: 52px; margin-left: -11px; border: 3px solid; border-color: var(--shadow) var(--light) var(--light) var(--shadow); background: #dce3da; }
.bar-sub { height: 56px; margin-top: 2px; }
.bar-quick { height: 62px; gap: 12px; }
.bar-quick .sep { margin: 3px 5px 3px 4px; }
.bar-objects { height: 63px; gap: 17px; margin-top: 2px; border-left-width: 2px; }
.bar-objects .sep { margin: 3px -4px; }
.bar-objects .grip { margin-right: -3px; }

/* sunken panes and scroll bars */
.sunken { background: #fff; border: 3px solid; border-color: var(--shadow) var(--light) var(--light) var(--shadow); box-shadow: inset 3px 3px var(--dark), inset -3px -3px var(--face); padding: 3px; min-width: 0; min-height: 0; }
.tri { width: 0; height: 0; border: 9px solid transparent; flex: none; }
.tri-up { border-top-width: 0; border-bottom: 10px solid var(--ink); }
.tri-down { border-bottom-width: 0; border-top: 10px solid var(--ink); }
.tri-left { border-left-width: 0; border-right: 10px solid var(--ink); }
.tri-right { border-right-width: 0; border-left: 10px solid var(--ink); }
.tri-small { border-width: 8px 7px 0; margin: 0 -1px 0 -4px; }
.vscroll { flex: none; width: 38px; display: flex; flex-direction: column; }
.hscroll { flex: none; height: 40px; display: flex; }
.sbtn { flex: none; width: 38px; height: 39px; display: flex; align-items: center; justify-content: center; }
.hscroll .sbtn { height: 40px; }
.track { flex: 1; display: flex; flex-direction: column; background: var(--track); min-height: 0; }
.hscroll .track { flex-direction: row; }
.track-end { justify-content: flex-end; }
.corner { width: 38px; background: var(--face); display: flex; align-items: flex-end; justify-content: flex-end; }
.size-grip { width: 28px; height: 28px; fill: none; stroke: var(--shadow); stroke-width: 2; }
.sg-l { stroke: var(--light); }

/* explorer */
.recent { flex: none; display: flex; height: 319px; }
.recent-list { flex: 1; min-width: 0; overflow: hidden; padding: 4px 0 0 3px; white-space: nowrap; }
.nav-tree { flex: 1; display: flex; flex-direction: column; margin-top: 5px; }
.pane-row { flex: 1; min-height: 0; display: flex; overflow: hidden; }

/* trees */
.tree { flex: 1; min-width: 0; display: grid; grid-auto-rows: minmax(0, 1fr); overflow: hidden; white-space: nowrap; }
.tree li { display: flex; align-items: center; min-width: 0; }
.tree-nav { height: 101%; }
.tree-groups { height: 103%; font-family: var(--list); font-size: 27px; }
.g { flex: none; align-self: stretch; width: 47px; display: flex; align-items: center; padding-left: 10px; background-repeat: no-repeat; --v: repeating-linear-gradient(180deg, #8fb08e 0 2px, transparent 2px 4px); --h: repeating-linear-gradient(90deg, #8fb08e 0 2px, transparent 2px 4px); }
.gv { background-image: var(--v); background-position: 20px 0; background-size: 2px 100%; }
.gt, .gl, .gf { background-image: var(--v), var(--h); background-position: 20px 0, 24px 50%; background-size: 2px 100%, 20px 2px; }
.gl { background-size: 2px 50%, 20px 2px; }
.gf { background-position: 20px 100%, 24px 50%; background-size: 2px 50%, 20px 2px; }
.ex { width: 22px; height: 22px; background: #fff; border: 2px solid var(--shadow); font: bold 22px/18px var(--ui); display: flex; align-items: center; justify-content: center; }
.ni { flex: none; width: 38px; height: 31px; margin-right: 9px; }
.ni-tall { height: 38px; }
.cut { flex: none; width: 14px; height: 18px; margin: 16px 35px 0 -49px; }
.lb { align-self: stretch; display: flex; align-items: center; padding: 0 6px 0 3px; }
.lb-on { background: var(--face); }
.tree input { flex: none; appearance: none; width: 27px; height: 27px; margin: 0 7px 0 5px; border: 3px solid var(--ink); background: #fff; }
.fi { flex: none; width: 40px; height: 34px; margin-right: 7px; }
.tree-groups .lb { padding: 0 5px; }

/* address book */
.split { flex: 1; min-height: 0; display: flex; }
.groups { flex: 0 0 44%; display: flex; flex-direction: column; }
.objects { flex: 1; min-width: 0; margin-left: 9px; display: flex; flex-direction: column; }
.grid-row { flex: 1; min-height: 0; display: flex; }
.grid-view { flex: 1; min-width: 0; }
.grid { width: 100%; height: 100%; table-layout: fixed; border-collapse: separate; border-spacing: 0; font: 26px/32px var(--list); }
.col-phone { width: 281px; }
.grid th { height: 42px; padding: 0; text-align: left; font-weight: normal; border-right: 3px solid var(--ink); }
.th { display: flex; height: 42px; justify-content: space-between; align-items: center; padding-left: 7px; }
.fbtn { align-self: flex-end; width: 25px; height: 21px; display: flex; align-items: center; justify-content: center; border: solid; border-width: 2px; border-color: var(--light) var(--shadow) var(--shadow) var(--light); }
.grid td { padding: 0 0 0 7px; white-space: nowrap; overflow: hidden; background: #f4f1e8; border-right: 2px solid #c2c4c4; }
.grid tr:nth-child(odd) td { background: #e6e7d5; }
.grid tr .cell-on.cell-on { background: #788aa6; color: #fff; }
.status { flex: none; display: flex; gap: 6px; margin-top: 5px; }
.cellbox { flex: 1; height: 42px; line-height: 36px; padding-left: 3px; border: 3px solid; border-color: var(--shadow) var(--light) var(--light) var(--shadow); }
.cellbox-end { flex: 0 0 29%; display: flex; align-items: flex-end; justify-content: flex-end; border-right: 0; }
```
